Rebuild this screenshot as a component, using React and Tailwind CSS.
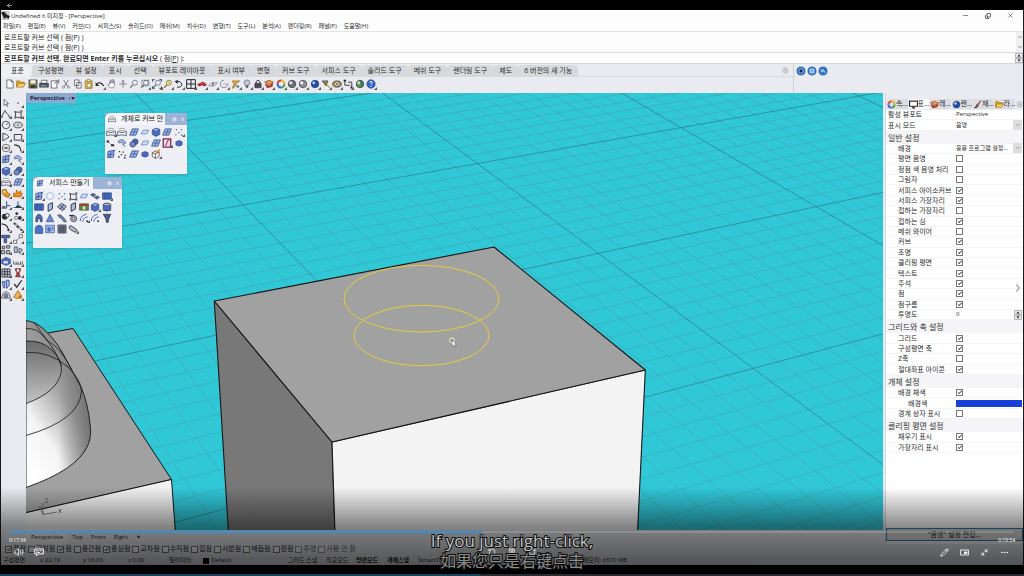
import React from "react";
import {
  ArrowLeft,
  Minus,
  Copy as RestoreIcon,
  X,
  ChevronUp,
  ChevronDown,
  ChevronRight,
  Volume2,
  Pencil,
  Minimize2,
  Ellipsis,
  RotateCcw,
  RotateCw,
  Pause,
  Settings,
} from "lucide-react";

const K = "#2b2b33";
const B = "#4a6cbc";
const L = "#a4b9e6";
const D = "#2a4590";

const ball = (a, b) => (
  <>
    <circle cx="8" cy="8" r="6" fill={a} stroke={K} />
    <circle cx="6" cy="6" r="2.4" fill={b} />
  </>
);
const stroke = (d, c = K, w = 1.3) => <path d={d} fill="none" stroke={c} strokeWidth={w} />;
const lens = (extra, c = "#6c7684") => (
  <>
    <circle cx="9.5" cy="6" r="4" fill="#e7eef5" stroke={c} strokeWidth="1.3" />
    <path d="M6.5 9 2 14" stroke={c} strokeWidth="2" />
    {extra}
  </>
);

const ICONS = {
  newFile: <path d="M3 1.5h7l3 3v10H3zM10 1.5v3h3" fill="#fff" stroke={K} />,
  open: (
    <>
      <path d="M1 13V3h5l1 2h6v3" fill="#d9a52c" stroke="#96690f" />
      <path d="M1 13 4 7h11l-3 6z" fill="#f6cf63" stroke="#96690f" />
    </>
  ),
  save: (
    <>
      <path d="M1.5 1.5h13v13h-13z" fill="#8b8a45" stroke={K} />
      <path d="M4 2h8v5H4z" fill="#f5f5f5" />
      <path d="M4 10h8v4H4z" fill="#33343c" />
    </>
  ),
  print: (
    <>
      <path d="M4 2h9l-1 5H3z" fill="#fff" stroke={K} />
      <path d="M1 7h14v6H1z" fill="#4d5561" stroke={K} />
      <path d="M3 11h9" stroke="#d8dbe0" />
    </>
  ),
  notes: (
    <>
      <path d="M2 3h9v11.500H2z" fill="#fff" stroke={K} />
      <path d="M7 7 14 1v5h-3" fill="#cfd6df" stroke={K} />
    </>
  ),
  cut: (
    <>
      {stroke("M4 1.500 11 12M12 1.500 5 12", "#5c6470")}
      <circle cx="4" cy="13" r="1.800" fill="none" stroke="#5c6470" />
      <circle cx="12" cy="13" r="1.800" fill="none" stroke="#5c6470" />
    </>
  ),
  copy: <path d="M2.500 1.500h7v9h-7zM6 5.500h7v9H6z" fill="#fff" stroke={K} />,
  paste: (
    <>
      <path d="M2 3h11v12H2z" fill="#e9c548" stroke="#7a5b12" />
      <path d="M5 1h5v3H5zM5 7h6v6H5z" fill="#fff" stroke="#7a5b12" />
    </>
  ),
  undo: <>{stroke("M3 8Q8 3 14 11", K, 1.800)}<path d="M1 5v6h6z" fill={K} /></>,
  hand: <path d="M4 14 1.500 9 4 9V4h1.500v3V2H8v5-6h2v6-4h2v7l-1.500 4z" fill="#fff" stroke="#6d6d75" />,
  move: stroke("M8 2v12M2 8h12M6 5l2-3 2 3", "#6a7380"),
  zoom: lens(null),
  zoomWin: lens(<path d="M3 2h11v9H3z" fill="none" stroke={K} strokeDasharray="2 1" />),
  zoomExt: lens(<path d="M1 4V1h3M12 1h3v3M15 12v3h-3M4 15H1v-3" fill="none" stroke={K} strokeWidth="1.500" />),
  zoomSel: lens(<circle cx="9.500" cy="6" r="2.200" fill="#e8c63a" />, "#84701f"),
  back: <>{stroke("M5 13h3q6-1 4-6-2-4-7-3", K, 1.600)}<path d="M6 1 1 4l5 4z" fill={K} /></>,
  four: (
    <>
      <path d="M1 1h14v14H1z" fill="#e5e8ee" stroke={K} strokeWidth="1.600" />
      <path d="M8 1v14M1 8h14" stroke={K} strokeWidth="1.600" />
    </>
  ),
  car: (
    <>
      <path d="M1 10V8l4-1 2-2h4l2 2 2 1v2z" fill="#c9302c" stroke="#7e1512" strokeWidth="0.600" />
      <circle cx="4.500" cy="10.500" r="1.300" fill={K} />
      <circle cx="11.500" cy="10.500" r="1.300" fill={K} />
    </>
  ),
  plane: <>{stroke("M1 11 6 6h9l-5 5zM8 12V5", "#7d8797")}<circle cx="8" cy="8" r="1.500" fill="#b34646" /></>,
  circlePt: <>{stroke("M14 8a6 6 0 1 1-6-6", "#77808d")}<path d="M7 8h8" stroke="#b34646" strokeDasharray="2 1" /></>,
  flag: <><path d="M2 3h12l-6 4v4l-6 4 3-7z" fill="#e9a837" stroke="#8c5a12" /><circle cx="11" cy="12" r="2" fill={B} /></>,
  bulb: <><circle cx="8" cy="6" r="4.500" fill="#c3ccd6" stroke="#4e5968" /><path d="M6 10h4v4H6z" fill="#4e5968" /></>,
  lock: <>{stroke("M5 7V4q3-4 6 0v3", K, 1.500)}<path d="M3 7h10v7H3z" fill="#4a4d55" stroke={K} /></>,
  layer: <><path d="M1 5 8 2l7 3-5 4z" fill="#f0a04a" stroke="#7e2512" /><path d="M2 8l3 6 8-2 1-5-5 4z" fill="#c23b24" stroke="#7e2512" /></>,
  wheel: (
    <g fill="none" strokeWidth="3.200">
      <path d="M8 2.500A5.500 5.500 0 0 1 13.500 8" stroke="#e7b52c" />
      <path d="M13.500 8A5.500 5.500 0 0 1 8 13.500" stroke="#45a648" />
      <path d="M8 13.500A5.500 5.500 0 0 1 2.500 8" stroke="#3a66d4" />
      <path d="M2.500 8A5.500 5.500 0 0 1 8 2.500" stroke="#d8403c" />
    </g>
  ),
  ballGray: ball("#6f747b", "#eef1f4"),
  ballLight: ball("#8d9197", "#ffffff"),
  ballBlue: ball("#1c4fb8", "#a9c6ff"),
  wedge: <><path d="M2 3h9l-3 8z" fill="#8e8a52" stroke={K} /><path d="M9 9l5 5" stroke="#d89a2a" strokeWidth="2" /></>,
  gear: <><ellipse cx="8" cy="8" rx="7" ry="5" fill="#a78b4f" stroke={K} /><circle cx="8" cy="8" r="2.500" fill="#5f7c48" stroke="#fff" /></>,
  dims: <>{stroke("M3 2v8h8M8 5h6v9", K, 1.400)}<path d="M1 1h4v3H1zM12 12h3v3h-3z" fill={K} /></>,
  globe: <>{ball("#5b9a4a", "#cfe6b8")}<path d="M8 3q5 3 2 9" stroke="#2d5e8c" fill="none" strokeWidth="2" /></>,
  help: (
    <>
      <circle cx="8" cy="8" r="6.700" fill="#2f63c7" stroke={D} />
      {stroke("M5.500 6Q6 3.500 8.300 3.700 11 4.500 9.500 7 8 8 8 9.500M8 11v1.800", "#fff", 1.600)}
    </>
  ),
  arrow: <path d="M5 2v10l2.500-2.500 2 4 1.500-1-2-3.500h3z" fill="#fff" stroke={K} />,
  point: <path d="M7 7h2v2H7z" fill={K} />,
  poly: <>{stroke("M1 12 6 3l8 9")}<path d="M0 11h3v3H0zM5 2h3v3H5zM12 11h3v3h-3z" fill="#777" /></>,
  curve: <>{stroke("M4 13V5h9v9z")}<path d="M2 3h3v3H2zM12 2h3v3h-3zM2 12h3v3H2zM12 12h3v3h-3z" fill="#666" /></>,
  circle: <><circle cx="8" cy="8" r="6" fill="none" stroke={K} strokeWidth="1.200" /><path d="M8 8l4-4" stroke={K} /></>,
  ellipse: <><ellipse cx="8" cy="8" rx="7" ry="4.500" fill="none" stroke={K} strokeWidth="1.200" />{stroke("M8 3v10M2 8h12", "#888")}</>,
  arc: <>{stroke("M3 2v12l10-6Q10 3 3 2")}</>,
  rect: <path d="M2 4h12v9H2z" fill="none" stroke={K} strokeWidth="1.400" />,
  polygon: <><circle cx="8" cy="8" r="6" fill="none" stroke={K} />{stroke("M4 8h8M8 6v4")}</>,
  fillet: stroke("M2 3q10 0 11 11", K, 1.700),
  surf: <><path d="M3 4l10-2-1 11-9 1z" fill={L} stroke={D} strokeWidth="1.200" />{stroke("M1 14 15 1M7 3v11M3 9h10", D, 1)}</>,
  sweep: <><path d="M2 5q8-6 12 3l-3 2q-4-5-8-2z" fill={L} stroke={D} />{stroke("M9 10l4 4", K)}</>,
  cube: (
    <>
      <path d="M2 5l6-3 6 2v8l-6 3-6-3z" fill={B} stroke={D} />
      <path d="M2 5l6-3 6 2-6 3z" fill={L} stroke={D} />
    </>
  ),
  balls: <><circle cx="10" cy="6" r="4.500" fill={B} stroke={K} /><circle cx="6" cy="10" r="4.500" fill="#6d8bd3" stroke={K} /></>,
  loft: <><ellipse cx="8" cy="4" rx="5" ry="2" fill="#fff" stroke="#777" /><path d="M1 7q7 4 14 0v7q-7-3-14 0z" fill="#e6ebf5" stroke="#555b66" strokeWidth="1.300" /></>,
  patch: <><path d="M5 3h10l-4 10H1z" fill={L} stroke={D} strokeWidth="1.200" />{stroke("M3 8h10M10 3 6 13", D, 1)}</>,
  patchLight: <><path d="M5 5h9l-3 6H2z" fill="#cddaf5" stroke={B} /></>,
  gumball: <><path d="M2 3l6-1 2 5 5 3-3 5-6-2-4-4z" fill="#e3982d" stroke="#7c4b0e" /><circle cx="5" cy="6" r="2" fill="#f7d07d" /></>,
  fire: <path d="M1 14V8l3 2 2-7 3 5 3-4 1 5 2-1-2 6z" fill="#f08a1c" stroke="#a94f0a" />,
  trim: <>{stroke("M1 13h8V2M9 9h6", D, 1.500)}<path d="M2 10h5v2H2z" fill={K} /></>,
  join: <>{stroke("M1 12h14M8 2v8", D, 1.500)}<path d="M5 9h7v3H5z" fill={K} /></>,
  dark: <><circle cx="6" cy="9" r="4.500" fill={K} /><circle cx="10" cy="7" r="3" fill="#fff" stroke={K} strokeWidth="1.500" /></>,
  dark2: <><circle cx="6" cy="4" r="2.200" fill={K} /><circle cx="5" cy="11" r="2.500" fill="#fff" stroke={K} /><circle cx="11" cy="11" r="3" fill={K} /></>,
  bend: <>{stroke("M1 3q10 1 11 10", K, 1.700)}<circle cx="12" cy="13" r="1.800" fill={K} /></>,
  nodes: <>{stroke("M2 2q4 8 12 11M4 2l9 8", "#666")}<path d="M1 1h3v3H1zM6 6h3v3H6zM12 11h3v3h-3z" fill={K} /></>,
  text: <path d="M1 2h13v4h-3V5H9v9H5V5H4v1H1z" fill={B} stroke={K} />,
  scale: <>{stroke("M3 13 13 3", "#666")}<path d="M1 10h5v5H1zM10 1h5v5h-5z" fill="#fff" stroke={K} /></>,
  array: <path d="M2 2h4v4H2zM9 1h5v4H9zM1 9h5v5H1zM9 9h5v5H9z" fill="#cdd3de" stroke={K} strokeWidth="1.300" />,
  mirror: <path d="M2 3h5v9H2zM10 5l5 2-4 7-2-3z" fill={L} stroke={K} />,
  solid: <><path d="M1 6l7-4 7 3v7l-7 3-7-3z" fill={B} stroke={D} /><path d="M4 8h7v4H4z" fill="#d5e1fa" /></>,
  rake: stroke("M1 8v5h14V8M5 13V9M8 13V9M12 13V9", "#555"),
  grid: <path d="M1.500 1.500h13v13h-13zM6 1.500v13M10 1.500v13M1.500 6h13M1.500 10h13" fill="#cdd6ea" stroke={K} strokeWidth="1.400" />,
  column: <><path d="M4 1h8v3l-2 3v3l2 4H4l2-4V7L4 4z" fill="#b7453b" stroke="#54201c" /><circle cx="8" cy="4" r="2" fill="#fff" /></>,
  twist: <path d="M2 4h4v10H4zM8 2h5v8l-4 5z" fill={L} stroke={D} strokeWidth="1.300" />,
  check: stroke("M2 8l4 5 8-11", K, 2),
  dome: <><path d="M1 13q1-10 7-10t7 10z" fill="#d6dae2" stroke={K} /><circle cx="8" cy="9" r="3" fill="#8c96a7" stroke={K} /></>,
  cone: <><path d="M8 1l6 9-8 4-5-3z" fill="#f0b04a" stroke="#7d4d0d" /><path d="M9 9h5v5H9z" fill="#c97420" /></>,
  dots: <path d="M3 3h2v2H3zM11 3h2v2h-2zM7 8h2v2H7zM2 11h2v2H2zM11 12h3v2h-3z" fill={B} />,
  points: <path d="M3 3h2v2H3zM9 4h2v2H9zM6 8h2v2H6zM2 11h2v3H2zM12 9h2v2h-2zM11 13h3v2h-3z" fill={K} />,
  pts: <>{stroke("M2 5l5 5 7 3", "#999")}<path d="M1 4h4v3H1zM8 10h5v3H8z" fill={K} /></>,
  chain: <><path d="M1 6l4-2 4 2-4 3zM7 10l4-2 4 2-4 3z" fill={B} stroke={K} /></>,
  hatch: <><path d="M2 1.500h12v13H2z" fill="#f0dce6" stroke="#7d2448" strokeWidth="2" />{stroke("M5 12q3-1 3-5t4-4", "#7d2448", 1.600)}</>,
  smallCube: <path d="M3 6l5-2 5 2v5l-5 2-5-2z" fill={B} stroke={D} />,
  wire: <><path d="M2 6l5-3 6 2v7l-6 3-5-3zM2 6l5 2 6-3M7 8v7" fill="#f3f3f3" stroke={K} /><path d="M8 7l6-6" stroke="#e08a22" strokeWidth="2.500" /></>,
  quad: <><circle cx="8" cy="8" r="5.500" fill="#f2f6ff" stroke={L} strokeWidth="1.600" /></>,
  sq: <path d="M1 3h14v10H1zM5 3v10M10 3v10" fill={B} stroke={D} strokeWidth="1.300" />,
  sheet: <path d="M5 4l7-3v10l-7 4z" fill={L} stroke={K} strokeWidth="1.400" />,
  diamond: <path d="M1 8l6-6 8 5-6 7zM4 5l8 7M11 4 5 12" fill={L} stroke={K} strokeWidth="1.200" />,
  photo: <><path d="M1 3h14v10H1z" fill="#5d8a45" stroke="#5b241d" /><path d="M1 3h14v3H1z" fill="#a34034" /><path d="M6 7h4v5H6z" fill="#dfe7c9" /></>,
  cyl: <><path d="M2 4q6-4 12 0v9q-6 3-12 0z" fill={B} stroke={K} /><ellipse cx="8" cy="4" rx="6" ry="2.200" fill={L} stroke={K} /></>,
  bell: <path d="M3 14V7q2-5 5-5t5 5v7h-3V9H6v5z" fill={B} stroke={K} />,
  tri: <path d="M8 2l6 12H2z" fill="#6d87c9" stroke={D} />,
  stair: <path d="M1 3h5l3 3 3 3 3 5h-4L8 9 4 7z" fill="#6d87c9" stroke={K} />,
  roll: <><circle cx="9" cy="9" r="5" fill="#a6b1c6" stroke={K} /><circle cx="9" cy="9" r="2" fill="#fff" stroke={K} /><path d="M2 4h7" stroke={K} strokeWidth="2" /></>,
  fan: <>{stroke("M2 13Q2 4 12 2M6 14Q6 8 14 6", B, 1.600)}<circle cx="13" cy="13" r="1.500" fill={K} /></>,
  funnel: <path d="M2 2h12l-3 7-1 6H7L6 9z" fill="#4a5f96" stroke={K} />,
  arch: <path d="M2 15V7q1-5 6-5t6 5v8z" fill="#4c70c9" stroke={D} />,
  frame: <><path d="M1 2h14v12H1z" fill={L} stroke={D} /><path d="M4 5h5v7H4zM11 5h2v4h-2z" fill={B} /></>,
  darkgrid: <path d="M1.500 1.500h13v13h-13zM5 1.500v13M8 1.500v13M11 1.500v13M1.500 5h13M1.500 8h13M1.500 11h13" fill="#8f9bb8" stroke={K} />,
  capsule: <path d="M2 4q2-3 5 0l7 5q2 4-3 4L4 9q-3-2-2-5z" fill="#b8bcc4" stroke={K} strokeWidth="1.300" />,
  monitor: <><path d="M1 2h14v9H1z" fill="#fff" stroke={K} strokeWidth="2" /><path d="M5 14h6M8 11v3" stroke={K} strokeWidth="2" /></>,
  brush: <><path d="M14 1 7 8l2 2z" fill="#c9a58c" stroke={K} /><path d="M7 8l2 2q-1 5-7 4 3-1 5-6z" fill="#b34b3c" stroke={K} /></>,
  swirl: <><circle cx="8" cy="8" r="6.500" fill="#2b78cf" stroke="#1a4e93" /><path d="M5 5h6v6H5zM5 8h6" fill="none" stroke="#e6f2ff" strokeWidth="1.400" /></>,
  swirlDot: <><circle cx="8" cy="8" r="6.500" fill="#2b78cf" stroke="#1a4e93" /><circle cx="8" cy="8" r="3.500" fill="#0d2c5c" stroke="#e6f2ff" /></>,
  swirlBar: <><circle cx="8" cy="8" r="6.500" fill="#2b78cf" stroke="#1a4e93" />{stroke("M4 6l8 4M5 10l4-5", "#e6f2ff", 1.500)}</>,
  caption: <path d="M1 3h14v8H7l-3 3v-3H1zM3.500 6h4M9 6h3.500M3.500 8.500h6" fill="none" stroke="#fff" strokeWidth="1.500" />,
  pip: <><path d="M1 3.500h14v9H1z" fill="none" stroke="#fff" strokeWidth="1.500" /><path d="M7 6.500h6v4H7z" fill="#fff" /></>,
};

function Icon({ name, className = "size-[11px]" }) {
  return (
    <svg viewBox="0 0 16 16" className={"block shrink-0 " + className} aria-hidden="true">
      {ICONS[name]}
    </svg>
  );
}

function Tool({ name, menu = false }) {
  return (
    <button type="button" aria-label={name} className="relative block size-[11px] shrink-0">
      <Icon name={name} className="size-[10px]" />
      {menu && (
        <svg viewBox="0 0 4 4" className="absolute right-0 bottom-0 size-[3px]" aria-hidden="true">
          <path d="M4 0v4H0z" fill="#555" />
        </svg>
      )}
    </button>
  );
}

const MENUS = ["파일(F)", "편집(E)", "뷰(V)", "커브(C)", "서피스(S)", "솔리드(O)", "메쉬(M)", "치수(D)", "변형(T)", "도구(L)", "분석(A)", "렌더링(R)", "패널(P)", "도움말(H)"];
const TABS = ["표준", "구성평면", "뷰 설정", "표시", "선택", "뷰포트 레이아웃", "표시 여부", "변형", "커브 도구", "서피스 도구", "솔리드 도구", "메쉬 도구", "렌더링 도구", "제도", "6 버전의 새 기능"];
const TOOLBAR = ["newFile", "open", "save", "print", "notes", "cut", "copy", "paste", "undo", "hand", "move", "zoom", "zoomWin", "zoomExt", "zoomSel", "back", "four", "car", "plane", "circlePt", "flag", "bulb", "lock", "layer", "wheel", "ballGray", "ballLight", "ballBlue", "wedge", "gear", "dims", "globe", "help"];
const NO_MENU = ["newFile", "open", "save", "print", "notes", "cut", "copy", "paste", "hand", "move", "zoom", "globe"];
const SIDE = ["arrow", "point", "poly", "curve", "circle", "ellipse", "arc", "rect", "polygon", "fillet", "surf", "sweep", "cube", "balls", "loft", "patch", "gumball", "fire", "trim", "join", "dark", "dark2", "bend", "nodes", "text", "scale", "array", "mirror", "solid", "rake", "grid", "column", "twist", "check", "dome", "cone"];
const CURVE_TOOLS = ["loft", "loft", "patch", "patchLight", "cube", "patch", "dots", "pts", "sweep", "balls", "patchLight", "patch", "hatch", "smallCube", "surf", "points", "patch", "smallCube", "wire"];
const SURFACE_TOOLS = ["surf", "quad", "dots", "curve", "patchLight", "chain", "sq", "sq", "sheet", "diamond", "sheet", "photo", "cube", "cyl", "bell", "tri", "stair", "roll", "fan", "fan", "funnel", "arch", "frame", "darkgrid", "capsule"];

const SETTINGS = [
  { label: "활성 뷰포트", text: "Perspective" },
  { label: "표시 모드", select: "음영" },
  { heading: "일반 설정" },
  { label: "배경", select: "응용 프로그램 설정...", indent: 1 },
  { label: "평면 음영", on: false, indent: 1 },
  { label: "정점 색 음영 처리", on: false, indent: 1 },
  { label: "그림자", on: false, indent: 1 },
  { label: "서피스 아이소커브", on: true, indent: 1 },
  { label: "서피스 가장자리", on: true, indent: 1 },
  { label: "접하는 가장자리", on: false, indent: 1 },
  { label: "접하는 심", on: true, indent: 1 },
  { label: "메쉬 와이어", on: false, indent: 1 },
  { label: "커브", on: true, indent: 1 },
  { label: "조명", on: true, indent: 1 },
  { label: "클리핑 평면", on: true, indent: 1 },
  { label: "텍스트", on: true, indent: 1 },
  { label: "주석", on: true, indent: 1 },
  { label: "점", on: true, indent: 1 },
  { label: "점구름", on: true, indent: 1 },
  { label: "투명도", number: "0", indent: 1 },
  { heading: "그리드와 축 설정" },
  { label: "그리드", on: true, indent: 1 },
  { label: "구성평면 축", on: true, indent: 1 },
  { label: "Z축", on: false, indent: 1 },
  { label: "절대좌표 아이콘", on: true, indent: 1 },
  { heading: "개체 설정" },
  { label: "배경 채색", on: true, indent: 1 },
  { label: "배경색", color: true, indent: 2 },
  { label: "경계 상자 표시", on: false, indent: 1 },
  { heading: "클리핑 평면 설정" },
  { label: "채우기 표시", on: true, indent: 1 },
  { label: "가장자리 표시", on: true, indent: 1 },
];

const OSNAPS = [["끝점", true], ["근처점", false], ["점", true], ["중간점", false], ["중심점", true], ["교차점", false], ["수직점", false], ["접점", false], ["사분점", false], ["매듭점", false], ["정점", false], ["투영", false], ["사용 안 함", false]];

const BOX =
  "m-0 block size-[7px] shrink-0 appearance-none border border-[#777] bg-white checked:after:mx-auto checked:after:block checked:after:h-[4px] checked:after:w-[2px] checked:after:rotate-45 checked:after:border-r checked:after:border-b checked:after:border-[#555] checked:after:content-['']";

/* Ground plane: maps a construction-plane cell to the perspective view. */
function project(u, v) {
  const w = 1 + 0.01403 * u - 0.022 * v;
  return [(50.25 * u + 11 * v + 477.5) / w, (-5.4 * u + 12.37 * v + 163.6) / w];
}

/* Ten grid cells lie between two major lines; a cell is half a plane unit. */
function gridPath(major) {
  let d = "";
  for (let n = -80; n <= 120; n++) {
    if ((n % 10 === 0) !== major) continue;
    const i = n / 2;
    if (i >= -20) {
      const [a, b] = project(i, -32);
      const [c, e] = project(i, 27);
      d += `M${a.toFixed(1)} ${b.toFixed(1)}L${c.toFixed(1)} ${e.toFixed(1)}`;
    }
    if (i <= 27) {
      const [a, b] = project(-20, i);
      const [c, e] = project(60, i);
      d += `M${a.toFixed(1)} ${b.toFixed(1)}L${c.toFixed(1)} ${e.toFixed(1)}`;
    }
  }
  return d;
}

function Scene() {
  return (
    <svg viewBox="26 93 857 438" preserveAspectRatio="xMinYMin slice" className="block size-full" role="img" aria-label="Perspective">
      <defs>
        <linearGradient id="dome" x1="0.8" y1="0" x2="0.25" y2="1">
          <stop offset="0" stopColor="#6d6d6d" />
          <stop offset="0.45" stopColor="#a4a4a4" />
          <stop offset="0.75" stopColor="#f4f4f4" />
          <stop offset="1" stopColor="#ffffff" />
        </linearGradient>
        <linearGradient id="domeSide" x1="0" y1="0" x2="1" y2="0">
          <stop offset="0.5" stopColor="#666" stopOpacity="0" />
          <stop offset="1" stopColor="#666" stopOpacity="0.75" />
        </linearGradient>
        <linearGradient id="domeTop" x1="0" y1="0" x2="0" y2="1">
          <stop offset="0" stopColor="#6a6a6a" />
          <stop offset="1" stopColor="#c2c2c2" />
        </linearGradient>
      </defs>
      <rect x="26" y="93" width="1400" height="900" fill="#30c7d7" />
      <path d={gridPath(false)} stroke="#4d929d" strokeOpacity="0.65" strokeWidth="0.6" fill="none" />
      <path d={gridPath(true)} stroke="#33757f" strokeOpacity="0.8" strokeWidth="0.8" fill="none" />
      <g stroke="#161616" strokeLinejoin="round">
        <path d="M20 338 73 328.500 171.500 479.500 20 514z" fill="#a1a1a1" strokeWidth="1" />
        <path d="M20 514 171.500 479.500 175.500 533H20z" fill="#f1f1f1" strokeWidth="1" />
        <path d="M26 320.500Q36 322 43 328.500 54 338 62 352L81.500 388Q88 404 90 424 92 438 87 447 76 470 26 487.500z" fill="url(#dome)" stroke="none" />
        <path d="M26 320.500Q36 322 43 328.500 54 338 62 352L81.500 388Q88 404 90 424 92 438 87 447 76 470 26 487.500z" fill="url(#domeSide)" strokeWidth="0.9" />
        <path d="M26 341Q42 340 52 350 62 360 61.500 371 58 392 26 403.500z" fill="url(#domeTop)" strokeWidth="0.8" />
        <path d="M26 328.500Q38 328 44 337 56 350 61.500 366" fill="none" strokeWidth="0.8" />
        <path d="M26 352.500Q50 351 68 367 81 380 81.500 391 80 420 26 435.500" fill="none" strokeWidth="0.8" />
        <path d="M34 322Q42 334 48 341 60 347 72 370" fill="none" strokeWidth="0.7" />
      </g>
      <g stroke="#161616" strokeWidth="1.100" strokeLinejoin="round">
        <path d="M214.300 301 332 442 335 533H228.500z" fill="#787878" />
        <path d="M332 442 645.300 370 637.500 533H335z" fill="#f3f3f3" />
        <path d="M214.300 301 494 247 645.300 370 332 442z" fill="#a1a1a1" />
      </g>
      <g fill="none" stroke="#e3cd3c" strokeWidth="1">
        <ellipse cx="421.500" cy="298.700" rx="77.500" ry="33.300" />
        <ellipse cx="421.500" cy="335.500" rx="67.500" ry="30.200" />
      </g>
      <circle cx="452" cy="340.500" r="2.500" fill="none" stroke="#f3f0b8" />
      <path d="M452 340v6.500l1.600-1.400 1 2.400 1-.5-1-2.200h2z" fill="#fff" stroke="#333" strokeWidth="0.400" />
      <g stroke="#666" fill="none" strokeWidth="0.800">
        <path d="M43 514.500V503M43 514.500 57 512M43 514.500 40 508" />
        <path d="M45 498.500h3l-3 4h3M58.500 509l3 4M61.500 509l-3 4" />
        <path d="M38.500 506l1.500 2 1.500-2" />
      </g>
    </svg>
  );
}

function FloatingPanel({ title, icon, tools, className, tabClass }) {
  return (
    <section className={"absolute flex flex-col bg-[#edeff4] shadow-sm " + className}>
      <header className="flex h-3 items-stretch bg-[#9db3d6]">
        <h2 className={"flex items-center gap-[5px] rounded-tl-md bg-[#f4f5f8] pl-[3px] text-[7px] leading-3 whitespace-nowrap text-[#222] " + tabClass}>
          <Icon name={icon} className="size-2" />
          <span>{title}</span>
        </h2>
        <span className="flex flex-1 items-center justify-end gap-[3px] pr-[2px] text-white">
          <button type="button" aria-label="옵션"><Settings className="size-[5px]" strokeWidth={3} /></button>
          <button type="button" aria-label="닫기"><X className="size-[5px]" strokeWidth={3} /></button>
        </span>
      </header>
      <div className="grid w-[80px] grid-cols-7 pt-px pl-px">
        {tools.map((t, i) => (
          <Tool key={i} name={t} menu={i % 6 === 0} />
        ))}
      </div>
    </section>
  );
}

function SettingRow({ row, index }) {
  if (row.heading) {
    return <h3 className="h-[13px] shrink-0 bg-[#f5f5f7] pl-[2px] text-[8px] leading-[13px] text-[#333]">{row.heading}</h3>;
  }
  const id = "setting-" + index;
  const pad = row.indent === 2 ? "pl-[22px]" : row.indent === 1 ? "pl-3" : "pl-[2px]";
  return (
    <div className="flex min-h-0 flex-1 items-center border-b border-[#f4f4f6] pr-px">
      <label htmlFor={id} className={"w-[70px] shrink-0 whitespace-nowrap text-[7px] leading-[9px] " + pad}>
        {row.label}
      </label>
      {row.text && <output id={id} className="text-[6px] leading-[9px]">{row.text}</output>}
      {row.select && (
        <span className="flex min-w-0 flex-1 items-center">
          <select id={id} className="h-[10px] min-w-0 flex-1 appearance-none overflow-hidden bg-transparent p-0 text-[6px] leading-[10px]">
            <option>{row.select}</option>
          </select>
          <span className="flex h-[10px] w-[9px] items-center justify-center bg-[#dddde0]">
            <ChevronDown className="size-[6px] text-[#666]" />
          </span>
        </span>
      )}
      {row.number && (
        <>
          <input id={id} type="text" defaultValue={row.number} className="h-[9px] min-w-0 flex-1 bg-transparent p-0 text-[6px]" />
          <Spinner />
        </>
      )}
      {row.color && <input id={id} type="button" aria-label={row.label} className="h-[7px] flex-1 bg-[#1840d8]" />}
      {row.on !== undefined && <input id={id} type="checkbox" defaultChecked={row.on} className={BOX} />}
    </div>
  );
}

function Spinner() {
  return (
    <svg viewBox="0 0 8 10" className="h-[10px] w-2 shrink-0" aria-hidden="true">
      <path d="M0.500 0.500h7v4h-7zM0.500 5.500h7v4h-7z" fill="#ececee" stroke="#b5b5b8" />
      <path d="M4 1.500 5.500 3.500H2.500zM4 8.500 5.500 6.500H2.500z" fill="#111" />
    </svg>
  );
}

export default function App() {
  return (
    <div className="relative flex h-screen min-h-[576px] flex-col overflow-hidden bg-black font-['Open_Sans','Noto_Sans_CJK_KR','Noto_Sans_CJK_SC',sans-serif] text-[#2a2a2a]">
      <div className="flex h-[10px] shrink-0 items-center pl-[6px] text-white">
        <button type="button" aria-label="뒤로"><ArrowLeft className="size-[7px]" /></button>
      </div>

      <div className="flex min-h-0 flex-1 flex-col border-x border-[#1a1a1a] bg-[#e9ebf0]">
        <div className="bg-[#fdfdfd]">
          <div className="flex h-[11px] items-center">
            <svg viewBox="0 0 16 16" className="size-[9px]" aria-hidden="true">
              <path d="M1 0h14v16H1z" fill="#c8c8c8" />
              <path d="M0 3l5-2 6 6 5 2-3 5-4-3-3 3-3-6z" fill="#222" />
            </svg>
            <h1 className="flex-1 pl-px text-[6px] leading-[10px]">Undefined 6 미지정 - [Perspective]</h1>
            <div className="flex items-center gap-4 pr-[9px] text-[#333]">
              <button type="button" aria-label="최소화"><Minus className="size-[7px]" /></button>
              <button type="button" aria-label="이전 크기로"><RestoreIcon className="size-[6px] -scale-x-100 rotate-180" strokeWidth={3} /></button>
              <button type="button" aria-label="닫기"><X className="size-[7px]" /></button>
            </div>
          </div>
          <nav className="flex h-[11px] items-center gap-[7px] border-b border-[#e4e4e8] pl-[2px] text-[6px] leading-[10px] whitespace-nowrap">
            {MENUS.map((m) => (
              <button type="button" key={m}>{m}</button>
            ))}
          </nav>
          <div className="flex h-[21px] border-b border-[#dcdce0]">
            <div className="flex-1 pt-px pl-[3px] text-[7px] leading-[10px]">
              <p>로프트할 커브 선택 ( 점(P) )</p>
              <p>로프트할 커브 선택 ( 점(P) )</p>
            </div>
            <div className="flex w-[7px] flex-col items-center justify-between bg-[#f0f0f2] py-[2px] text-[#444]">
              <ChevronUp className="size-[6px]" />
              <ChevronDown className="size-[6px]" />
            </div>
          </div>
          <div className="flex h-[10px] items-center">
            <label htmlFor="prompt" className="pl-[3px] text-[7px] leading-[9px] whitespace-nowrap">
              <b>로프트할 커브 선택. 완료되면 Enter 키를 누르십시오</b> ( 점(<u>P</u>) ):
            </label>
            <input id="prompt" className="h-2 min-w-0 flex-1 bg-transparent text-[6px] outline-none" />
            <Spinner />
          </div>
        </div>

        <div className="flex h-[30px] shrink-0 items-start border-t border-[#d6d7dc]">
          <div className="h-full flex-1">
            <div className="flex h-[13px] items-center border-b border-[#dadbe1] pt-px">
              <div role="tablist" className="flex items-center">
                {TABS.map((t, i) => (
                  <button
                    type="button"
                    role="tab"
                    key={t}
                    aria-selected={i === 0}
                    className={"h-3 rounded-t-sm px-[6px] text-[7px] leading-3 whitespace-nowrap " + (i === 0 ? "mr-[2px] bg-[#eff0f4] pl-[10px]" : "bg-[#d8d9dc]")}
                  >
                    {t}
                  </button>
                ))}
              </div>
              <button type="button" aria-label="옵션" className="mr-[4px] ml-auto text-[#999]">
                <Settings className="size-[7px]" />
              </button>
            </div>
            <div className="flex h-[14px] w-[376px] items-center justify-between pl-[4px]">
              {TOOLBAR.map((t) => (
                <Tool key={t} name={t} menu={!NO_MENU.includes(t)} />
              ))}
            </div>
          </div>
          <div className="flex h-full w-[230px] border-l border-[#cfd0d6] pt-px pl-[2px]">
            <Tool name="swirlDot" />
            <Tool name="swirl" />
            <Tool name="swirlBar" />
          </div>
        </div>

        <div className="flex min-h-0 flex-1">
          <div className="flex min-w-0 flex-1 flex-col">
            <div className="flex min-h-0 flex-1">
              <aside className="w-[25px] shrink-0 pt-1">
                <div className="grid h-[204px] w-[23px] grid-cols-2 content-between">
                  {SIDE.map((t, i) => (
                    <Tool key={t} name={t} menu={i > 0} />
                  ))}
                </div>
              </aside>
              <main className="relative min-w-0 flex-1 overflow-hidden">
                <Scene />
                <div className="absolute top-0 left-0 flex h-[10px] items-center bg-[#8ea9d0] text-[6px] leading-[10px] font-bold text-[#17243d]">
                  <span className="pr-[4px] pl-[4px]">Perspective</span>
                  <button type="button" aria-label="뷰포트 메뉴" className="border-l border-[#5f779c] px-px">
                    <svg viewBox="0 0 6 4" className="h-[3px] w-[4px]"><path d="M0 0h6L3 4z" fill="#111" /></svg>
                  </button>
                </div>
                <FloatingPanel title="개체로 커브 만" icon="loft" tools={CURVE_TOOLS} className="top-[20px] left-[79px] h-[61px] w-[82px]" tabClass="w-[60px]" />
                <FloatingPanel title="서피스 만들기" icon="surf" tools={SURFACE_TOOLS} className="top-[84px] left-[7px] h-[71px] w-[89px]" tabClass="w-[60px]" />
              </main>
            </div>
            <div className="flex h-[14px] shrink-0 items-center text-[6px] leading-[10px]">
              <button type="button" className="ml-[25px] h-full bg-[#f5f5f7] pr-[5px] pl-[5px]">Perspective</button>
              <button type="button" className="h-full px-[4px]">Top</button>
              <button type="button" className="h-full px-[4px]">Front</button>
              <button type="button" className="h-full px-[4px]">Right</button>
              <button type="button" className="h-full px-[4px]" aria-label="새 뷰">✦</button>
            </div>
          </div>

          <aside className="ml-[2px] flex w-[138px] shrink-0 flex-col border-l border-[#cdd9ec] bg-white">
            <div role="tablist" className="flex h-[17px] items-end justify-between bg-[#e9ebf0] pb-px pl-px text-[7px] leading-[10px]">
              {[["wheel", "속..."], ["monitor", "표..."], ["layer", "레..."], ["ballBlue", "렌..."], ["brush", "재..."], ["open", "라..."]].map(([ic, t], i) => (
                <button type="button" role="tab" key={t} aria-selected={i === 1} className={"flex items-center " + (i === 1 ? "bg-white" : "bg-[#dcdde1]")}>
                  <Icon name={ic} className="size-[9px]" />
                  {t}
                </button>
              ))}
              <Settings className="mb-px size-[7px] text-[#999]" />
            </div>
            <div className="flex h-[343px] shrink-0 flex-col">
              {SETTINGS.map((r, i) => (
                <SettingRow key={i} row={r} index={i} />
              ))}
            </div>
            <div className="flex flex-1 items-end pb-[3px]">
              <button type="button" className="h-[13px] flex-1 border border-[#2f7fae] bg-[#dcdcde] text-[7px] leading-[11px]">"음영" 설정 편집...</button>
            </div>
          </aside>
        </div>

        <fieldset className="flex h-3 shrink-0 items-center gap-[2px] pl-[4px] text-[7px] leading-[10px] whitespace-nowrap">
          {OSNAPS.map(([t, on], i) => (
            <label key={t} className={"flex items-center gap-px " + (i > 10 ? "opacity-70" : "")}>
              <input type="checkbox" defaultChecked={on} className={BOX} />
              {t}
            </label>
          ))}
        </fieldset>
        <footer className="flex h-[9px] shrink-0 items-center text-[6px] leading-[9px] whitespace-nowrap">
          <span className="w-[39px] pl-[2px]">구성평면</span>
          <span className="w-[43px]">x 22.19</span>
          <span className="w-[45px]">y 16.00</span>
          <span className="w-[41px]">z 0.00</span>
          <span className="w-[34px]">밀리미터</span>
          <span className="flex w-[85px] items-center gap-[2px]"><i className="size-[6px] bg-black" />Default</span>
          <span className="w-[38px]">그리드 스냅</span>
          <span className="w-[30px]">직교모드</span>
          <b className="w-[31px]">평면모드</b>
          <b className="w-[31px]">개체스냅</b>
          <span className="w-[165px] border-l border-[#bbb]">SmartTrack</span>
          <span>메모리: 6570 MB</span>
        </footer>
      </div>
      <div className="h-[9px] shrink-0" />
      <div className="flex h-[2px] shrink-0 bg-[#272c30]"><div className="w-[47%] bg-[#17425d]" /></div>

      <button type="button" aria-label="다음" className="absolute top-[280px] right-0 text-[#a9a9ae]">
        <ChevronRight className="h-4 w-3" strokeWidth={2.500} />
      </button>

      <div className="absolute inset-x-0 bottom-[11px] h-[78px] bg-gradient-to-b from-black/0 via-black/45 via-50% to-black/65">
        <div className="mt-[44px] flex h-[2px] pr-[10px] pl-[10px]">
          <div className="w-[47%] bg-[#3a8fd0]" />
          <div className="flex-1 bg-white/15" />
        </div>
        <div className="flex justify-between px-[9px] pt-[3px] text-[5px] leading-[8px] text-white">
          <span>0:17:34</span>
          <span>0:19:54</span>
        </div>
        <div className="flex items-center justify-between pt-[3px] pr-[15px] pl-[14px] text-white">
          <div className="flex flex-1 items-center gap-[10px]">
            <button type="button" aria-label="볼륨"><Volume2 className="size-[10px]" /></button>
            <button type="button" aria-label="자막"><Icon name="caption" className="size-[10px]" /></button>
          </div>
          <div className="flex items-center gap-[12px]">
            <button type="button" aria-label="뒤로 건너뛰기"><RotateCcw className="size-[8px]" /></button>
            <button type="button" aria-label="일시 중지"><Pause className="size-[8px]" /></button>
            <button type="button" aria-label="앞으로 건너뛰기"><RotateCw className="size-[8px]" /></button>
          </div>
          <div className="flex flex-1 items-center justify-end gap-[11px]">
            <button type="button" aria-label="편집"><Pencil className="size-[9px]" /></button>
            <button type="button" aria-label="작은 화면"><Icon name="pip" className="size-[9px]" /></button>
            <button type="button" aria-label="전체 화면 종료"><Minimize2 className="size-[9px]" /></button>
            <button type="button" aria-label="더 보기"><Ellipsis className="size-[9px]" /></button>
          </div>
        </div>
      </div>

      <div className="pointer-events-none absolute inset-x-0 bottom-[5px] text-center text-[#c4c4c4] [paint-order:stroke_fill] [-webkit-text-stroke:2px_#0a0a0a]">
        <p className="text-[17px] leading-[20px]">If you just right-click,</p>
        <p lang="zh-CN" className="text-[16px] leading-[20px] text-[#8c8c8c]">如果您只是右键点击</p>
      </div>
    </div>
  );
}
